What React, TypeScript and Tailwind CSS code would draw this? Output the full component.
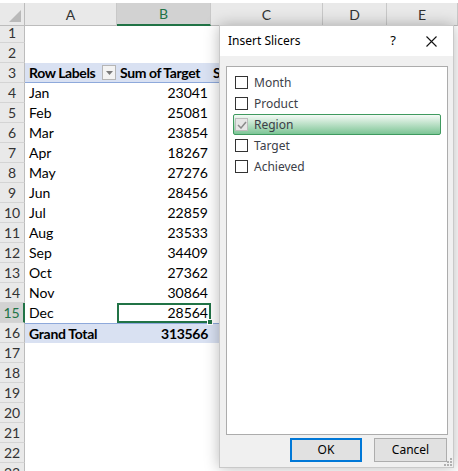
import { useState } from 'react'

const MONTHS: [string, number][] = [
  ['Jan', 23041],
  ['Feb', 25081],
  ['Mar', 23854],
  ['Apr', 18267],
  ['May', 27276],
  ['Jun', 28456],
  ['Jul', 22859],
  ['Aug', 23533],
  ['Sep', 34409],
  ['Oct', 27362],
  ['Nov', 30864],
  ['Dec', 28564],
]

const FIELDS = ['Month', 'Product', 'Region', 'Target', 'Achieved']

const COLS = 'grid grid-cols-[25px_92px_94px_112px_64px_1fr]'
const cellFont = { fontFamily: 'Lato, "Liberation Sans", sans-serif' }
const uiFont = { fontFamily: '"Noto Sans", "Open Sans", sans-serif' }

function RowHead({ n, selected }: { n: number; selected?: boolean }) {
  return (
    <div
      className={
        'flex items-center justify-center border-b border-[#d4d4d4] text-[14px] font-normal tracking-normal ' +
        (selected
          ? 'bg-[#d2d2d2] text-[#217346] border-r-2 border-r-[#217346]'
          : 'bg-[#e9e9e9] text-[#333] border-r border-r-[#bcbcbc]')
      }
    >
      {n}
    </div>
  )
}

function Sheet() {
  const rows = []
  for (let r = 1; r <= 23; r++) {
    let a: React.ReactNode = null
    let b: React.ReactNode = null
    let c: React.ReactNode = null
    let rowCls = ''
    if (r === 3) {
      rowCls = 'font-bold tracking-[-0.4px]'
      a = (
        <div className="flex h-full items-center bg-[#d9e1f2] border-b border-[#8ea9db] pl-[4px]">
          <span>Row Labels</span>
          <span className="ml-auto mr-[1px] flex h-[15px] w-[14px] shrink-0 items-center justify-center border border-[#b5b5b5] bg-[#f3f3f3]">
            <svg width="7" height="4" viewBox="0 0 7 4">
              <path d="M0 0h7L3.5 4z" fill="#7a7a7a" />
            </svg>
          </span>
        </div>
      )
      b = (
        <div className="flex h-full items-center bg-[#d9e1f2] border-b border-[#8ea9db] pl-[3px]">
          Sum of Target
        </div>
      )
      c = (
        <div className="flex h-full items-center bg-[#d9e1f2] border-b border-[#8ea9db] pl-[2px]">
          S
        </div>
      )
    } else if (r >= 4 && r <= 15) {
      const [m, v] = MONTHS[r - 4]
      a = <div className="flex h-full items-center pl-[4px]">{m}</div>
      b =
        r === 15 ? (
          <div className="relative flex h-full items-center justify-end border-2 border-[#217346] pr-[1px]">
            {v}
            <span className="absolute -bottom-[4px] -right-[4px] h-[6px] w-[6px] border border-white bg-[#217346]" />
          </div>
        ) : (
          <div className="flex h-full items-center justify-end pr-[3px]">{v}</div>
        )
    } else if (r === 16) {
      rowCls = 'font-bold tracking-[-0.3px]'
      a = (
        <div className="flex h-full items-center bg-[#d9e1f2] border-t border-[#8ea9db] pl-[4px]">
          Grand Total
        </div>
      )
      b = (
        <div className="flex h-full items-center justify-end bg-[#d9e1f2] border-t border-[#8ea9db] pr-[3px]">
          313566
        </div>
      )
      c = <div className="h-full bg-[#d9e1f2] border-t border-[#8ea9db]" />
    }
    rows.push(
      <div
        key={r}
        className={COLS + ' h-[20px] whitespace-nowrap text-[14px] leading-none text-black ' + rowCls}
      >
        <RowHead n={r} selected={r === 15} />
        <div className="h-full overflow-visible">{a}</div>
        <div className="h-full">{b}</div>
        <div className="h-full">{c}</div>
        <div />
        <div />
      </div>
    )
  }
  return <div>{rows}</div>
}

function ColHeaders() {
  const cols = ['A', 'B', 'C', 'D', 'E']
  return (
    <div className={COLS + ' h-[20px] text-[14px] text-[#333]'}>
      <div className="relative border-r border-b border-[#bcbcbc] bg-[#e9e9e9]">
        <svg className="absolute bottom-[3px] right-[3px]" width="12" height="12" viewBox="0 0 12 12">
          <path d="M12 0V12H0z" fill="#b9b9b9" />
        </svg>
      </div>
      {cols.map(c => (
        <div
          key={c}
          className={
            'flex items-center justify-center border-r border-[#c8c8c8] ' +
            (c === 'B'
              ? 'bg-[#d2d2d2] text-[#217346] border-b-2 border-b-[#217346]'
              : 'bg-[#e9e9e9] border-b border-b-[#bcbcbc]')
          }
        >
          {c}
        </div>
      ))}
    </div>
  )
}

function Dialog() {
  const [checked, setChecked] = useState<Record<string, boolean>>({ Region: true })
  return (
    <div
      className="absolute left-[219px] top-[25px] flex h-[443px] w-[235px] flex-col border border-[#c9c9c9] bg-[#f0f0f0] shadow-[0_0_14px_rgba(0,0,0,0.28)]"
      style={uiFont}
    >
      <div className="flex h-[30px] items-center bg-white pl-[8px] text-[12px] text-black">
        <span className="flex-1">Insert Slicers</span>
        <span className="mr-[30px] text-[13px]">?</span>
        <svg className="mr-[16px]" width="11" height="11" viewBox="0 0 11 11">
          <path d="M0.5 0.5l10 10M10.5 0.5l-10 10" stroke="#111" strokeWidth="1.1" />
        </svg>
      </div>
      <div className="ml-[6px] mt-[10px] h-[369px] w-[222px] border border-[#acacac] bg-white pt-[5px]">
        {FIELDS.map(f => {
          const on = !!checked[f]
          return (
            <div
              key={f}
              onClick={() => setChecked(p => ({ ...p, [f]: !p[f] }))}
              className={
                'mx-[6px] flex h-[21px] items-center pl-[1px] text-[12px] text-[#3c4048] ' +
                (on
                  ? 'rounded-[2px] border border-[#3f9a5f] bg-gradient-to-b from-[#f4faf6] to-[#7cc596]'
                  : 'border border-transparent')
              }
            >
              <span
                className={
                  'flex h-[13px] w-[13px] items-center justify-center border ' +
                  (on ? 'border-[#bcbcbc] bg-[#e6e6e6]' : 'border-[#333] bg-white')
                }
              >
                {on && (
                  <svg width="10" height="8" viewBox="0 0 10 8">
                    <path d="M1 4l3 3 5-6" fill="none" stroke="#8a8a8a" strokeWidth="1.5" />
                  </svg>
                )}
              </span>
              <span className="ml-[6px]">{f}</span>
            </div>
          )
        })}
      </div>
      <div className="mt-[3px] flex justify-end gap-[12px] pr-[6px] text-[12px] text-black">
        <button className="flex h-[24px] w-[72px] items-center justify-center border-2 border-[#0078d7] bg-[#e1e1e1]">
          OK
        </button>
        <button className="flex h-[24px] w-[73px] items-center justify-center border border-[#adadad] bg-[#e1e1e1]">
          Cancel
        </button>
      </div>
      <svg className="absolute bottom-[1px] right-[1px]" width="8" height="8" viewBox="0 0 8 8">
        <g fill="#b0b0b0">
          <rect x="6" y="0" width="2" height="2" />
          <rect x="3" y="3" width="2" height="2" />
          <rect x="6" y="3" width="2" height="2" />
          <rect x="0" y="6" width="2" height="2" />
          <rect x="3" y="6" width="2" height="2" />
          <rect x="6" y="6" width="2" height="2" />
        </g>
      </svg>
    </div>
  )
}

export default function App() {
  return (
    <div className="relative h-[471px] w-[458px] overflow-hidden bg-white" style={cellFont}>
      <div className="h-[3px] bg-white" />
      <ColHeaders />
      <Sheet />
      <Dialog />
    </div>
  )
}
